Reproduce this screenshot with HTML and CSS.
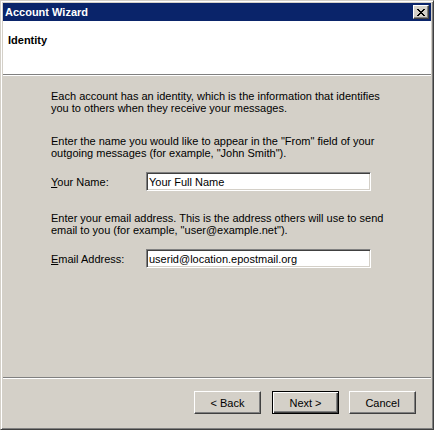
FILE: index.html
```html
<!DOCTYPE html>
<html lang="en">
<head>
  <meta charset="UTF-8" />
  <title>Account Wizard</title>
  <link rel="stylesheet" href="styles.css">
</head>
<body>

  <div class="window">
    <div class="titlebar">
      <span class="title">Account Wizard</span>
      <button class="closeBtn" aria-label="Close">
        <svg width="8" height="7" viewBox="0 0 8 7" shape-rendering="crispEdges">
          <path d="M0 0h2v1h-2zM6 0h2v1h-2zM1 1h2v1h-2zM5 1h2v1h-2zM2 2h4v1h-4zM3 3h2v1h-2zM2 4h4v1h-4zM1 5h2v1h-2zM5 5h2v1h-2zM0 6h2v1h-2zM6 6h2v1h-2z" fill="#000"/>
        </svg>
      </button>
    </div>

    <div class="header">
      <h1>Identity</h1>
    </div>
    <div class="etched"></div>

    <div class="content">
      <p>Each account has an identity, which is the information that identifies you to others when they receive your messages.</p>

      <p class="gap">Enter the name you would like to appear in the "From" field of your outgoing messages (for example, "John Smith").</p>
      <div class="field">
        <label for="name"><u>Y</u>our Name:</label>
        <input id="name" type="text" value="Your Full Name">
      </div>

      <p class="gap">Enter your email address. This is the address others will use to send email to you (for example, "user@example.net").</p>
      <div class="field">
        <label for="email"><u>E</u>mail Address:</label>
        <input id="email" type="text" value="userid@location.epostmail.org">
      </div>
    </div>

    <div class="etched"></div>
    <div class="footer">
      <button class="btn">&lt; Back</button>
      <button class="btn default">Next &gt;</button>
      <button class="btn">Cancel</button>
    </div>
  </div>

</body>
</html>
```

FILE: styles.css
```css
body {
  margin: 0;
  background: #d4d0c8;
  font-family: 'Liberation Sans', Arial, sans-serif;
  font-size: 11px;
  color: #000;
}

.window {
  width: 434px;
  height: 430px;
  box-sizing: border-box;
  border: 1px solid;
  border-color: #d4d0c8 #404040 #404040 #d4d0c8;
  box-shadow: inset 1px 1px #fff, inset -1px -1px #808080;
  padding: 2px;
  display: flex;
  flex-direction: column;
}

.titlebar {
  height: 18px;
  background: #0a246a;
  display: flex;
  align-items: center;
  justify-content: space-between;
  padding: 0 2px;
}

.title {
  color: #fff;
  font-weight: bold;
  font-size: 11px;
}

.closeBtn {
  width: 16px;
  height: 14px;
  padding: 0;
  margin: 0;
  background: #d4d0c8;
  border: 1px solid;
  border-color: #fff #404040 #404040 #fff;
  box-shadow: inset -1px -1px #808080;
  display: flex;
  align-items: center;
  justify-content: center;
}

.closeBtn svg {
  display: block;
  margin-left: -1px;
}

.header {
  background: #fff;
  height: 53px;
  padding: 13px 5px 0;
  box-sizing: border-box;
}

.header h1 {
  margin: 0;
  font-size: 11px;
  font-weight: bold;
  line-height: 13px;
}

.etched {
  border-top: 1px solid #808080;
  border-bottom: 1px solid #fff;
  height: 0;
}

.content {
  flex: 1;
  padding: 14px 40px 0 48px;
}

.content p {
  margin: 0;
  line-height: 12px;
}

.content p.gap {
  margin-top: 21px;
}

.field {
  display: flex;
  align-items: center;
  margin: 13px 0 21px;
}

.field label {
  width: 95px;
}

.field input {
  width: 225px;
  height: 19px;
  box-sizing: border-box;
  margin: 0;
  padding: 0 2px;
  font-family: inherit;
  font-size: 11px;
  background: #fff;
  border: 1px solid;
  border-color: #808080 #fff #fff #808080;
  box-shadow: inset 1px 1px #404040, inset -1px -1px #d4d0c8;
  outline: none;
}

.footer {
  display: flex;
  justify-content: flex-end;
  gap: 10px;
  padding: 12px 15px 13px 0;
}

.btn {
  width: 67px;
  height: 23px;
  margin: 0;
  padding: 0;
  font-family: inherit;
  font-size: 11px;
  color: #000;
  background: #d4d0c8;
  border: 1px solid;
  border-color: #fff #404040 #404040 #fff;
  box-shadow: inset -1px -1px #808080;
}

.btn.default {
  margin-left: 1px;
  border-color: #000;
  box-shadow: inset 1px 1px #fff, inset -1px -1px #404040, inset -2px -2px #808080;
}
```
